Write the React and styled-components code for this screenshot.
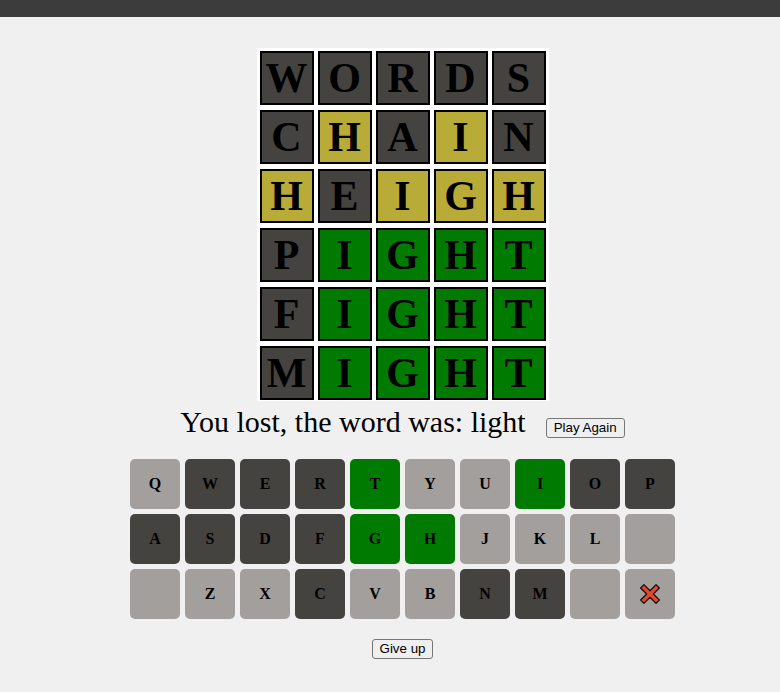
import React from "react";
import styled, { createGlobalStyle } from "styled-components";

const GlobalStyle = createGlobalStyle`
    body {
        margin: 0;
        background: #f0f0f0;
        font-family: "Liberation Serif", "Times New Roman", serif;
    }
`;

const COLORS = {
    dark: "#454340",
    light: "#a29f9d",
    yellow: "#b8ab37",
    green: "#007a00",
};

const guesses = [
    ["WORDS", "ddddd"],
    ["CHAIN", "dydyd"],
    ["HEIGH", "ydyyy"],
    ["PIGHT", "dgggg"],
    ["FIGHT", "dgggg"],
    ["MIGHT", "dgggg"],
];

const codeColor = { d: "dark", y: "yellow", g: "green", l: "light" };

// keyboard rows, "" is an empty key, "DEL" the cross
const keyRows = [
    [["Q", "l"], ["W", "d"], ["E", "d"], ["R", "d"], ["T", "g"], ["Y", "l"], ["U", "l"], ["I", "g"], ["O", "d"], ["P", "d"]],
    [["A", "d"], ["S", "d"], ["D", "d"], ["F", "d"], ["G", "g"], ["H", "g"], ["J", "l"], ["K", "l"], ["L", "l"], ["", "l"]],
    [["", "l"], ["Z", "l"], ["X", "l"], ["C", "d"], ["V", "l"], ["B", "l"], ["N", "d"], ["M", "d"], ["", "l"], ["DEL", "l"]],
];

const CrossIcon = () => (
    <svg width="22" height="22" viewBox="0 0 20 20">
        <path
            d="M1.5 4.5 L4.5 1.5 L10 7 L15.5 1.5 L18.5 4.5 L13 10 L18.5 15.5 L15.5 18.5 L10 13 L4.5 18.5 L1.5 15.5 L7 10 Z"
            fill="#e8472b"
            stroke="#111"
            strokeWidth="1.2"
            strokeLinejoin="round"
        />
    </svg>
);

const App = () => {
    return (
        <>
            <GlobalStyle />
            <TopBar />
            <Main>
                <Board>
                    {guesses.map(([word, codes], r) =>
                        word.split("").map((ch, c) => (
                            <Tile key={`${r}-${c}`} $color={COLORS[codeColor[codes[c]]]}>
                                {ch}
                            </Tile>
                        ))
                    )}
                </Board>
                <Message>
                    <span>You lost, the word was: light</span>
                    <Button $left="20px">Play Again</Button>
                </Message>
                <Keyboard>
                    {keyRows.map((row, r) => (
                        <KeyRow key={r}>
                            {row.map(([label, code], i) => (
                                <Key key={i} $color={COLORS[codeColor[code]]}>
                                    {label === "DEL" ? <CrossIcon /> : label}
                                </Key>
                            ))}
                        </KeyRow>
                    ))}
                </Keyboard>
                <Button>Give up</Button>
            </Main>
        </>
    );
};

export default App;

const TopBar = styled.div`
    height: 17px;
    background: #3c3c3c;
`;

const Main = styled.main`
    display: flex;
    flex-direction: column;
    align-items: center;
    padding-left: 25px;
    padding-top: 31px;
`;

const Board = styled.div`
    display: grid;
    grid-template-columns: repeat(5, 54px);
    grid-auto-rows: 54px;
    column-gap: 4px;
    row-gap: 5px;
    padding: 3px 3px 1px 3px;
    background: #ffffff;
`;

const Tile = styled.div`
    box-sizing: border-box;
    display: flex;
    align-items: center;
    justify-content: center;
    border: 2px solid #000;
    background: ${(props) => props.$color};
    color: #000;
    font-size: 42px;
    font-weight: 700;
    line-height: 1;
`;

const Message = styled.div`
    display: flex;
    align-items: baseline;
    margin-top: 4px;
    font-size: 30px;
    line-height: 34px;
    color: #000;
`;

const Button = styled.button`
    margin-left: ${(props) => props.$left || "0"};
    padding: 1px 7px;
    font-family: "Liberation Sans", Arial, sans-serif;
    font-size: 13.333px;
    line-height: 16px;
    color: #000;
    background: #efefef;
    border: 1px solid #767676;
    border-radius: 3px;
`;

const Keyboard = styled.div`
    display: flex;
    flex-direction: column;
    gap: 5px;
    margin-top: 20px;
    margin-bottom: 20px;
`;

const KeyRow = styled.div`
    display: flex;
    gap: 5px;
`;

const Key = styled.div`
    width: 50px;
    height: 50px;
    display: flex;
    align-items: center;
    justify-content: center;
    border-radius: 5px;
    background: ${(props) => props.$color};
    color: #000;
    font-size: 16px;
    font-weight: 700;
`;
